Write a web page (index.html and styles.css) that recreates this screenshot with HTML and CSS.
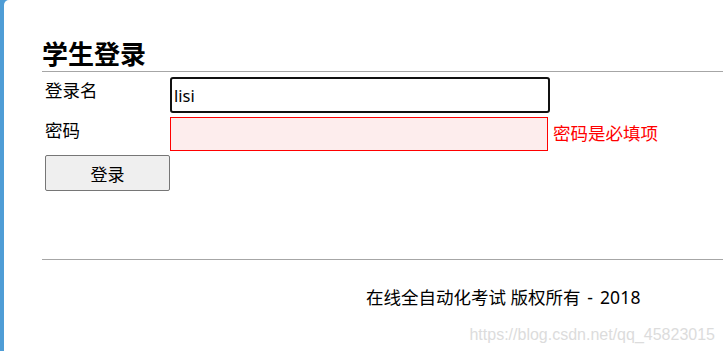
FILE: index.html
```html
<!DOCTYPE html>
<html lang="zh">
<head>
<meta charset="utf-8">
<title>学生登录</title>
<link rel="stylesheet" href="styles.css">
</head>
<body>
<div class="page">
  <div class="panel">
    <h1 class="title">学生登录</h1>
    <form class="form">
      <label class="label" for="name">登录名</label>
      <div class="field"><input id="name" class="input input-focus" type="text" value="lisi"></div>
      <label class="label" for="pwd">密码</label>
      <div class="field"><input id="pwd" class="input input-error" type="password" value=""><span class="error">密码是必填项</span></div>
      <button class="btn" type="button">登录</button>
    </form>
    <div class="footer">在线全自动化考试 版权所有<span class="year"> - 2018</span></div>
    <div class="watermark">https://blog.csdn.net/qq_45823015</div>
  </div>
</div>
</body>
</html>
```
FILE: styles.css
```css
html, body {
  margin: 0;
  padding: 0;
  height: 100%;
  overflow: hidden;
}
body {
  font-family: "Noto Sans CJK SC", "Liberation Sans", sans-serif;
  font-size: 17.5px;
  color: #000;
}
.page {
  background: #4f9dd6;
  height: 100%;
  display: flex;
}
.panel {
  position: relative;
  flex: 1;
  margin-left: 4px;
  background: #fff;
  border-top-left-radius: 5px;
  padding: 38px 0 0 38px;
}
.title {
  margin: 0;
  font-size: 26px;
  line-height: 30px;
  font-weight: bold;
  padding-bottom: 3px;
  border-bottom: 1px solid #a6a6a6;
}
.form {
  display: grid;
  grid-template-columns: 125px auto;
  row-gap: 4px;
  margin: 5px 0 0 3px;
  align-items: start;
}
.label {
  line-height: 24px;
  padding-top: 1px;
}
.field {
  display: flex;
  align-items: center;
}
.input {
  box-sizing: border-box;
  font-family: "Noto Sans", "Noto Sans CJK SC", sans-serif;
  font-size: 16.5px;
  padding: 0 2px;
  margin: 0;
  outline: none;
}
.input-focus {
  width: 380px;
  height: 36px;
  border: 2px solid #111;
  border-radius: 3px;
  background: #fff;
}
.input-error {
  width: 378px;
  height: 34px;
  border: 1px solid #ff0000;
  background: #fdeded;
}
.error {
  color: #ff0000;
  margin-left: 5px;
  line-height: 24px;
  position: relative;
  top: -1px;
}
.btn {
  grid-column: 1;
  box-sizing: border-box;
  width: 125px;
  height: 36px;
  background: #efefef;
  border: 1px solid #767676;
  border-radius: 2px;
  font-family: "Noto Sans CJK SC", "Liberation Sans", sans-serif;
  font-size: 17px;
  color: #000;
  padding: 0;
}
.footer {
  margin-top: 68px;
  border-top: 1px solid #a6a6a6;
  padding: 25px 0 0 324px;
  line-height: 24px;
  white-space: nowrap;
  font-family: "Noto Sans", "Noto Sans CJK SC", sans-serif;
}
.year {
  word-spacing: 2px;
  letter-spacing: 0.2px;
}
.watermark {
  position: absolute;
  right: 8px;
  bottom: 7px;
  font-family: "Liberation Sans", sans-serif;
  font-size: 16px;
  color: #dcdcdc;
}
```
